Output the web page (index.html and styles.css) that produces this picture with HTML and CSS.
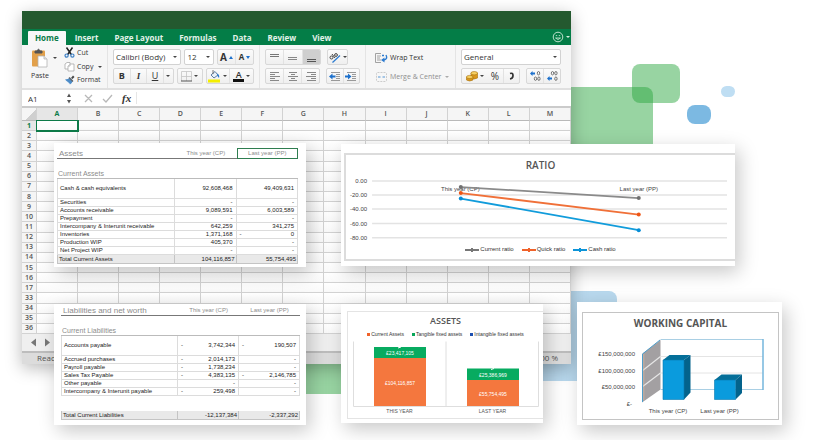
FILE: index.html
```html
<!DOCTYPE html>
<html lang="en">
<head>
<meta charset="utf-8">
<title>Financial workbook</title>
<link rel="stylesheet" href="styles.css">
</head>
<body>
<main class="stage">
  <span class="blob blob-green-large"></span>
  <span class="blob blob-green-small"></span>
  <span class="blob blob-blue"></span>
  <span class="blob blob-sky"></span>
  <span class="blob blob-blue-large"></span>
  <span class="blob blob-green-low"></span>

  <section class="workbook" aria-label="Workbook">
    <div class="titlebar"></div>
    <nav class="tabs">
      <button class="tab tab-active" type="button">Home</button>
      <button class="tab" type="button">Insert</button>
      <button class="tab" type="button">Page Layout</button>
      <button class="tab" type="button">Formulas</button>
      <button class="tab" type="button">Data</button>
      <button class="tab" type="button">Review</button>
      <button class="tab" type="button">View</button>
      <button class="feedback" type="button" aria-label="Feedback">
        <svg width="12" height="12" viewBox="0 0 12 12" fill="none" stroke="#bfe3cd"><circle cx="6" cy="6" r="4.8"/><path d="M3.5 7q2.5 3 5 0zM3.8 4.6h1.4M6.8 4.6h1.4" stroke-width=".9"/></svg>
        <i class="caret caret-light"></i>
      </button>
    </nav>

    <div class="ribbon">
      <div class="group clipboard">
        <button class="paste" type="button">
          <span class="paste-icon">
            <svg width="18" height="20" viewBox="0 0 18 20"><rect x="1" y="2.500" width="13" height="16" rx="1" fill="#e2a04a"/><path d="M4 5V3h2q1.500-3.500 3 0h2v2z" fill="#555" stroke="#555"/><path d="M7 8h6l3 3v8H7z" fill="#fff" stroke="#b4b4b4" stroke-width=".8"/><path d="M13 8v3h3" fill="#e6e6e6" stroke="#b4b4b4" stroke-width=".8"/></svg>
            <i class="caret"></i>
          </span>
          Paste
        </button>
        <div class="clip-list">
          <button class="plain" type="button"><svg width="11" height="11" viewBox="0 0 11 11" fill="none"><path d="M2.500.5l4.800 7M8.500.5l-4.800 7" stroke="#222" stroke-width="1.500"/><circle cx="2.600" cy="8.600" r="1.600" stroke="#3d7fc4" stroke-width="1.200"/><circle cx="8.400" cy="8.600" r="1.600" stroke="#3d7fc4" stroke-width="1.200"/></svg>Cut</button>
          <button class="plain" type="button"><svg width="11" height="11" viewBox="0 0 11 11" fill="#fff" stroke="#aaa" stroke-width=".8"><path d="M1 3l2-1.500h3V8H1z"/><path d="M4 5l2-2h4v7H4z"/><path d="M4 5h2V3"/></svg>Copy <i class="caret"></i></button>
          <button class="plain" type="button"><svg width="11" height="11" viewBox="0 0 11 11"><path d="M7 3l2-2.500 1.500 1.500L8.500 4z" fill="#444"/><path d="M1 4.500q3 0 5-2l3 3q-1 3-3 4z" fill="#4d8cc8"/><path d="M5 2.500l4 4" stroke="#666" stroke-width="1.300"/><path d="M3 6.500l3 3" stroke="#fff" stroke-width=".7"/></svg>Format</button>
        </div>
      </div>

      <div class="group fonts">
        <div class="line">
          <span class="picker picker-font"><select aria-label="Font"><option>Calibri (Body)</option></select><i class="caret"></i></span>
          <span class="picker picker-size"><select aria-label="Font size"><option>12</option></select><i class="caret"></i></span>
          <span class="set size-set">
            <button type="button" aria-label="Grow font"><span class="big-a">A</span><i class="tri-up"></i></button>
            <button type="button" aria-label="Shrink font"><span class="small-a">A</span><i class="tri-down"></i></button>
          </span>
        </div>
        <div class="line">
          <span class="set style-set">
            <button type="button"><b>B</b></button>
            <button type="button"><em>I</em></button>
            <button type="button"><u>U</u></button>
            <button class="narrow" type="button" aria-label="Underline styles"><i class="caret"></i></button>
          </span>
          <span class="set border-set">
            <button type="button" aria-label="Borders"><svg width="11" height="11" viewBox="0 0 11 11"><path d="M.5 10V.5h10V10M5.500.5V10M.5 5.500h10" fill="none" stroke="#c4c4c4" stroke-width=".8"/><path d="M0 10h11" stroke="#555" stroke-width="1.200"/></svg><i class="caret"></i></button>
          </span>
          <span class="set colour-set">
            <button type="button" aria-label="Fill colour"><svg width="13" height="13" viewBox="0 0 13 13"><path d="M3 5l4-3.500L10 5 6 8z" fill="#e8f0f8" stroke="#4d6f96" stroke-width=".9"/><path d="M9 3.500q3 1 2 4.500q-2-1-2-4.500z" fill="#2c7bd0"/><path d="M5 0v4" stroke="#555" stroke-width=".8"/><path d="M0 11h12" stroke="#f4ee00" stroke-width="3"/></svg><i class="caret"></i></button>
            <button type="button" aria-label="Font colour"><span class="colour-a">A</span><i class="caret"></i></button>
          </span>
        </div>
      </div>

      <div class="group align">
        <div class="line">
          <span class="set align-set">
            <button type="button" aria-label="Top"><svg width="9" height="9" viewBox="0 0 9 9" stroke="#777"><path d="M0 1.500h9M0 3.500h9"/></svg></button>
            <button type="button" aria-label="Middle"><svg width="9" height="9" viewBox="0 0 9 9" stroke="#888"><path d="M0 4.500h9M0 6.500h9"/></svg></button>
            <button class="pressed" type="button" aria-label="Bottom"><svg width="9" height="9" viewBox="0 0 9 9" stroke="#555"><path d="M0 6.500h9M0 8.500h9"/></svg></button>
          </span>
          <span class="set orient-set">
            <button type="button" aria-label="Orientation"><svg width="12" height="11" viewBox="0 0 12 11" fill="none"><path d="M3.500 10.500L11 3.500" stroke="#2c7bd0" stroke-width="1.200"/><circle cx="2.500" cy="5.500" r="1.500" stroke="#444"/><path d="M3 2l3 4" stroke="#444"/><circle cx="7" cy="3" r="1.400" stroke="#444"/></svg><i class="caret"></i></button>
          </span>
        </div>
        <div class="line">
          <span class="set align-set">
            <button type="button" aria-label="Left"><svg width="10" height="9" viewBox="0 0 10 9" stroke="#888"><path d="M0 .5h9M0 2.500h5M0 4.500h10M0 6.500h5M0 8.500h9"/></svg></button>
            <button type="button" aria-label="Centre"><svg width="10" height="9" viewBox="0 0 10 9" stroke="#888"><path d="M1 .5h8M3 2.500h4M0 4.500h10M3 6.500h4M1 8.500h8"/></svg></button>
            <button type="button" aria-label="Right"><svg width="10" height="9" viewBox="0 0 10 9" stroke="#888"><path d="M1 .5h9M5 2.500h5M0 4.500h10M5 6.500h5M1 8.500h9"/></svg></button>
          </span>
          <span class="set indent-set">
            <button type="button" aria-label="Decrease indent"><svg width="12" height="9" viewBox="0 0 12 9"><path d="M2 .5h9M7 2.500h4M7 4.500h4M7 6.500h4M2 8.500h9" stroke="#999"/><path d="M0 4.500L3.500 1.500v2h3v2h-3v2z" fill="#1c70cc"/></svg></button>
            <button type="button" aria-label="Increase indent"><svg width="12" height="9" viewBox="0 0 12 9"><path d="M2 .5h9M7 2.500h4M7 4.500h4M7 6.500h4M2 8.500h9" stroke="#999"/><path d="M6.500 4.500L3 1.500v2H0v2h3v2z" fill="#1c70cc"/></svg></button>
          </span>
        </div>
      </div>

      <div class="group wrap">
        <button class="plain" type="button"><svg width="13" height="10" viewBox="0 0 13 10" fill="none"><path d="M6 .5H.5v9H6M2 3h4M2 5h3M2 7h4" stroke="#999" stroke-width=".9"/><path d="M7 2.500h2M11 2q2 4-2 5" stroke="#2c7bd0" stroke-width="1.400"/><path d="M6 7l3.500-2.500v5z" fill="#2c7bd0"/></svg>Wrap Text</button>
        <button class="plain faded" type="button"><svg width="13" height="10" viewBox="0 0 13 10" fill="none"><rect x="1.500" y=".5" width="10" height="9" rx="1" stroke="#ccc" stroke-dasharray="2 1"/><path d="M3 5h2.500M7.500 5H10" stroke="#8ab6e0" stroke-width="1.500"/></svg>Merge &amp; Center <i class="caret"></i></button>
      </div>

      <div class="group number">
        <div class="line">
          <span class="picker picker-number"><select aria-label="Number format"><option>General</option></select><i class="caret"></i></span>
        </div>
        <div class="line">
          <span class="set number-set">
            <button class="wide" type="button" aria-label="Currency"><svg width="12" height="11" viewBox="0 0 12 11" stroke="#a8700c" stroke-width=".6"><path d="M5 2v5q3 2 6.500 0V2z" fill="#d9971d"/><ellipse cx="8.200" cy="2.200" rx="3.300" ry="1.700" fill="#f6cf63"/><path d="M.5 6v3q3 2 6.500 0V6z" fill="#d9971d"/><ellipse cx="3.700" cy="6" rx="3.300" ry="1.600" fill="#f6cf63"/></svg><i class="caret"></i></button>
            <button class="percent" type="button">%</button>
            <button type="button" aria-label="Comma style"><svg width="5" height="8" viewBox="0 0 5 8"><path d="M1 1.500Q4 .5 4 3.500T1 7" fill="none" stroke="#333" stroke-width="1.700"/></svg></button>
          </span>
          <span class="set decimal-set">
            <button type="button" aria-label="Increase decimal"><svg width="11" height="10" viewBox="0 0 11 10"><path d="M0 2.500L2.500 0v1.500H5v2H2.500V5z" fill="#1c70cc"/><g fill="none" stroke="#666" stroke-width=".9"><ellipse cx="8.500" cy="2.200" rx="1.200" ry="1.700"/><ellipse cx="5.500" cy="7.700" rx="1.200" ry="1.700"/><ellipse cx="8.900" cy="7.700" rx="1.200" ry="1.700"/></g></svg></button>
            <button type="button" aria-label="Decrease decimal"><svg width="11" height="10" viewBox="0 0 11 10"><path d="M0 7.500L2.500 5v1.500H5v2H2.500V10z" fill="#1c70cc"/><g fill="none" stroke="#666" stroke-width=".9"><ellipse cx="8.900" cy="2.200" rx="1.200" ry="1.700"/><ellipse cx="5.500" cy="2.200" rx="1.200" ry="1.700"/><ellipse cx="8.900" cy="7.700" rx="1.200" ry="1.700"/></g></svg></button>
          </span>
        </div>
      </div>
    </div>

    <div class="formula-bar">
      <input class="name-box" aria-label="Name box" value="A1">
      <svg class="stepper" width="6" height="11" viewBox="0 0 6 11" fill="#555"><path d="M1 4l2-3.500L5 4zM1 7l2 3.500L5 7z"/></svg>
      <svg class="entry-icons" width="34" height="9" viewBox="0 0 34 9" fill="none" stroke="#b8b8b8" stroke-width="1.300"><path d="M1 1l7 7M8 1L1 8M19 5l3 3 6-7"/></svg>
      <span class="fx">fx</span>
      <input class="formula" aria-label="Formula">
    </div>

    <table class="sheet">
      <thead><tr><th class="corner"></th><th class="current">A</th><th>B</th><th>C</th><th>D</th><th>E</th><th>F</th><th>G</th><th>H</th><th>I</th><th>J</th><th>K</th><th>L</th><th>M</th></tr></thead>
      <tbody id="cells"></tbody>
    </table>

    <div class="sheet-nav">
      <svg width="22" height="9" viewBox="0 0 22 9" fill="#777"><path d="M6 .5v8l-5-4zM15 .5v8l5-4z"/></svg>
    </div>
    <footer class="status"><span>Ready</span><span>100 %</span></footer>
  </section>

  <section class="card ledger-assets">
    <table class="ledger">
      <colgroup><col class="name-col"><col><col></colgroup>
      <thead>
        <tr class="head"><th>Assets</th><th>This year (CP)</th><th class="picked">Last year (PP)</th></tr>
        <tr class="section"><th colspan="3">Current Assets</th></tr>
      </thead>
      <tbody>
        <tr class="tall"><td>Cash &amp; cash equivalents</td><td>92,608,468</td><td>49,409,631</td></tr>
        <tr><td>Securities</td><td>-</td><td>-</td></tr>
        <tr><td>Accounts receivable</td><td>9,089,591</td><td>6,003,589</td></tr>
        <tr><td>Prepayment</td><td>-</td><td>-</td></tr>
        <tr><td>Intercompany &amp; Interunit receivable</td><td>642,259</td><td>341,275</td></tr>
        <tr><td>Inventories</td><td>1,371,168</td><td><span class="sign">-</span>0</td></tr>
        <tr><td>Production WIP</td><td>405,370</td><td>-</td></tr>
        <tr><td>Net Project WIP</td><td>-</td><td>-</td></tr>
      </tbody>
      <tfoot><tr class="total"><td>Total Current Assets</td><td>104,116,857</td><td>55,754,495</td></tr></tfoot>
    </table>
  </section>

  <section class="card ledger-liabilities">
    <table class="ledger">
      <colgroup><col class="name-col"><col><col></colgroup>
      <thead>
        <tr class="head"><th>Liabilities and net worth</th><th>This year (CP)</th><th>Last year (PP)</th></tr>
        <tr class="section"><th colspan="3">Current Liabilities</th></tr>
      </thead>
      <tbody>
        <tr class="tall"><td>Accounts payable</td><td><span class="sign">-</span>3,742,344</td><td><span class="sign">-</span>190,507</td></tr>
        <tr><td>Accrued purchases</td><td><span class="sign">-</span>2,014,173</td><td>-</td></tr>
        <tr><td>Payroll payable</td><td><span class="sign">-</span>1,738,234</td><td>-</td></tr>
        <tr><td>Sales Tax Payable</td><td><span class="sign">-</span>4,383,135</td><td><span class="sign">-</span>2,146,785</td></tr>
        <tr><td>Other payable</td><td>-</td><td>-</td></tr>
        <tr><td>Intercompany &amp; Interunit payable</td><td><span class="sign">-</span>259,498</td><td>-</td></tr>
      </tbody>
      <tfoot>
        <tr class="spacer"><td colspan="3"></td></tr>
        <tr class="total"><td>Total Current Liabilities</td><td>-12,137,384</td><td>-2,337,292</td></tr>
      </tfoot>
    </table>
  </section>

  <section class="card ratio">
    <div class="frame">
      <h2>RATIO</h2>
      <svg class="plot" viewBox="347 175 388 68">
        <path d="M373 181h354M373 195h354M373 209h354M373 223.500h354M373 237.500h354" stroke="#e3e3e3" stroke-width="1.500"/>
        <g class="label end"><text x="368" y="183">0.00</text><text x="368" y="197">-20.00</text><text x="368" y="211">-40.00</text><text x="368" y="225.500">-60.00</text><text x="368" y="239.500">-80.00</text></g>
        <g class="label mid"><text x="461" y="190.500">This year (CP)</text><text x="639" y="190.500">Last year (PP)</text></g>
        <g stroke-width="1.800"><path d="M461.500 187L639 198" stroke="#8a8a8a"/><path d="M461.500 193L639 214.500" stroke="#f07038"/><path d="M461.500 198.500L639 230" stroke="#119cdb"/></g>
        <g fill="#707070"><circle cx="461.500" cy="187" r="2"/><circle cx="639" cy="198" r="2"/></g>
        <g fill="#ee5515"><circle cx="461.500" cy="193" r="2"/><circle cx="639" cy="214.500" r="2"/></g>
        <g fill="#078dd6"><circle cx="461.500" cy="198.500" r="2"/><circle cx="639" cy="230" r="2"/></g>
      </svg>
      <ul class="line-legend"><li class="grey">Current ratio</li><li class="orange">Quick ratio</li><li class="blue">Cash ratio</li></ul>
    </div>
  </section>

  <section class="card assets">
    <div class="frame">
      <h2>ASSETS</h2>
      <ul class="square-legend"><li class="orange">Current Assets</li><li class="green">Tangible fixed assets</li><li class="navy">Intangible fixed assets</li></ul>
      <svg class="plot" viewBox="348 342 195 76">
        <path d="M353.500 343.500V408.500H538.500V343.500M446 343.500V408.500" fill="none" stroke="#dedede"/>
        <path d="M374 349h52v11h-52zM467 370.500h52v12h-52z" fill="#07ab60"/>
        <path d="M374 360h52v48h-52zM467 382h52v26h-52z" fill="#f4773e"/>
        <path d="M398 350l3-1M491 371.500l3-1" stroke="#fff"/>
        <g class="value mid"><text x="400" y="357">£23,417,105</text><text x="400" y="386.500">£104,116,857</text><text x="493" y="379">£25,386,969</text><text x="493" y="397.500">£55,754,495</text></g>
        <g class="tiny mid"><text x="399.500" y="415">THIS YEAR</text><text x="492.500" y="415">LAST YEAR</text></g>
      </svg>
    </div>
  </section>

  <section class="card capital">
    <div class="frame">
      <h2>WORKING CAPITAL</h2>
      <svg class="plot" viewBox="583 334 195 82">
        <path d="M642 354l18.500-14v49.500L642 402.500z" fill="#a3a0a2"/>
        <path d="M642 371l18.500-14.500M642 387l18.500-14" stroke="#e6e6e6" stroke-width="1.200"/>
        <path d="M660.500 356.500H763M660.500 373H763" stroke="#e4e4e4"/>
        <path d="M642.500 402V354L660 340" fill="none" stroke="#4c9dcb"/><path d="M643.800 400V354" stroke="#d9b9a0" stroke-width=".7"/>
        <path d="M660.500 339.500H763M660.500 389.500H763" stroke="#a9cfe4"/><path d="M763 339v51" stroke="#74b6dc" stroke-width="1.500"/>
        <path d="M663 360l6.500-5H690.500l-6.500 5zM714.500 380l7-5.500H742l-6.500 5.500z" fill="#046f99"/>
        <path d="M684 360l6.500-5v37.500l-6.500 7zM735.500 380l6.500-5.500V393l-6.500 6.500z" fill="#03638c"/>
        <path d="M663 360h21v39.500h-21zM714.500 380h21v19.500h-21z" fill="#0a9bdd" stroke="#0878b0" stroke-width=".6"/>
        <g class="label end"><text x="635" y="355.500">£150,000,000</text><text x="635" y="372.500">£100,000,000</text><text x="635" y="389">£50,000,000</text><text x="632" y="405.500">£-</text></g>
        <g class="label mid"><text x="668" y="412.500">This year (CP)</text><text x="719.500" y="412.500">Last year (PP)</text></g>
      </svg>
    </div>
  </section>
</main>
<script src="sheet.js"></script>
</body>
</html>
```
FILE: sheet.js
```js
const body = document.getElementById("cells");
const rows = [...Array(17).keys()].map(n => n + 1).concat([33, 34, 35, 36]);
for (const number of rows) {
  const row = body.insertRow();
  const head = document.createElement("th");
  head.textContent = number;
  row.append(head);
  for (let column = 0; column < 13; column++) row.insertCell();
}
body.rows[0].cells[0].className = "current";
body.rows[0].cells[1].className = "selected";
```
FILE: styles.css
```css
* { box-sizing: border-box; }
body { margin: 0; background: #fff; font-family: "Open Sans", "Noto Sans", sans-serif; color: #333; }
button, input, select { font: inherit; color: inherit; margin: 0; padding: 0; border: 0; background: none; }
svg { display: block; flex: none; }

.stage {
  position: relative;
  display: grid;
  min-height: 100vh;
  overflow: hidden;
  grid-template-columns: 22fr 32fr 252fr 35fr 202fr 28fr 6fr 158fr 47fr 38fr;
  grid-template-rows: 11px 132px 124px 36px 61px 61px auto;
}
.stage > section { min-width: 0; }

.blob { position: absolute; background: rgba(43, 166, 64, .485); border-radius: 8px; }
.blob-green-large { left: 500px; top: 87px; width: 153px; height: 120px; }
.blob-green-small { left: 632px; top: 64px; width: 48px; height: 39px; }
.blob-blue { left: 687px; top: 105px; width: 24px; height: 19px; background: #7cb9e2; }
.blob-sky { left: 721px; top: 86px; width: 14px; height: 11px; background: #bfdef3; }
.blob-blue-large { left: 480px; top: 291px; width: 137px; height: 90px; background: #b9d9ee; }
.blob-green-low { left: 200px; top: 300px; width: 200px; height: 94px; }

/* Workbook window */
.workbook {
  position: relative;
  grid-column: 2 / 7;
  grid-row: 2 / 6;
  display: flex;
  flex-direction: column;
  background: #fff;
  box-shadow: 0 4px 16px rgba(0, 0, 0, .28);
}
.titlebar { height: 18px; background: #24592f; }
.tabs { display: flex; height: 16px; padding: 2px 1px 0 6px; background: #047d47; font-size: 8px; font-weight: 700; line-height: 14px; color: #e3f3ea; }
.tab { padding: 0 8px; white-space: nowrap; }
.tab-active { background: #f7f7f7; color: #0a7a48; padding: 0 7px; margin-right: 1px; border-radius: 1px 1px 0 0; }
.feedback { display: flex; align-items: center; gap: 2px; margin-left: auto; height: 12px; }

.caret { display: inline-block; flex: none; border: 2px solid transparent; border-top: 2px solid #444; border-bottom: 0; }
.caret-light { border-top-color: #d5eedd; }

.ribbon {
  display: grid;
  grid-template-columns: 86fr 152fr 106fr 90fr 115fr;
  height: 43px;
  background: #f6f6f6;
  font-size: 7px;
  font-weight: 500;
}
.group { min-width: 0; padding: 4px 5px; border-right: 1px solid #e4e4e4; display: flex; flex-direction: column; gap: 3px; }
.group:last-child { padding-right: 10px; border-right: 0; }
.line { display: flex; gap: 3px; height: 16px; }

.clipboard { flex-direction: row; gap: 6px; padding: 1px 2px 0 9px; }
.paste { display: flex; flex-direction: column; width: 27px; line-height: 12px; text-align: left; }
.paste-icon { display: flex; align-items: center; gap: 4px; height: 24px; }
.clip-list { display: flex; flex-direction: column; padding-bottom: 1px; }
.plain { display: flex; align-items: center; gap: 4px; height: 13px; white-space: nowrap; line-height: 10px; }
.clip-list .plain { flex: 1; gap: 2px; }
.clip-list .caret { margin-left: 3px; }

.picker { position: relative; display: flex; align-items: center; border: 1px solid #d2d2d2; border-radius: 2px; background: #fff; }
.picker select { width: 100%; height: 100%; appearance: none; padding-left: 2px; font-size: 8px; line-height: 10px; }
.picker .caret { position: absolute; right: 3px; pointer-events: none; }
.picker-font { flex: 70; min-width: 0; }
.picker-size { flex: 29; min-width: 0; }
.picker-number { flex: 1; }
.size-set { flex: 37; }
.style-set { flex: 62; }
.border-set { flex: 25; }
.colour-set { flex: 49; }
.align-set { flex: 0 1 56px; }
.orient-set { flex: 0 1 21px; margin-left: 3px; }
.indent-set { flex: 0 1 34px; margin-left: 3px; }
.number-set { flex: 60; margin-right: 3px; }
.decimal-set { flex: 34; }

.set { display: flex; min-width: 0; border: 1px solid #d8d8d8; border-radius: 2px; background: linear-gradient(#fbfbfb, #efefef); overflow: hidden; }
.set button { flex: 1; min-width: 0; display: flex; align-items: center; justify-content: center; gap: 2px; font-size: 9px; line-height: 12px; }
.set button + button { border-left: 1px solid #e2e2e2; }
.set .narrow { flex: 0 0 10px; }
.set .wide { flex: 0 0 25px; }
.set .percent { border-left: 0; font-size: 10px; }
.set .pressed { background: #cfcfcf; }
.style-set em { font-family: "Liberation Serif", serif; font-weight: 700; }
.set .big-a { font-size: 10px; font-weight: 700; }
.set .small-a { font-size: 8px; font-weight: 700; }
.tri-up, .tri-down { border: 2px solid transparent; }
.tri-up { border-top: 0; border-bottom: 3px solid #1c70cc; }
.tri-down { border-bottom: 0; border-top: 3px solid #1c70cc; }
.colour-a { width: 11px; border-bottom: 3px solid #111; font-size: 9px; line-height: 9px; font-weight: 600; }

.wrap { padding: 6px 0 0 9px; gap: 6px; }
.wrap .plain { gap: 2px; }
.wrap .caret { margin-left: 2px; }
.faded { color: #8f8f8f; }
.faded .caret { border-top-color: #aaa; }

.formula-bar { display: flex; align-items: center; height: 20px; border-top: 2px solid #e0e0e0; border-bottom: 2px solid #cbcbcb; background: #fff; }
.name-box { width: 39px; padding-left: 6px; font-size: 8px; height: 14px; }
.stepper { margin-left: 5px; }
.entry-icons { margin-left: 12px; }
.fx { margin-left: 4px; padding-right: 5px; border-right: 1px solid #e6e6e6; font: italic 700 11px/12px "Liberation Serif", serif; }
.formula { flex: 1; min-width: 0; height: 14px; }

.sheet { width: 100%; height: 226px; table-layout: fixed; border-collapse: separate; border-spacing: 0; font-size: 7px; line-height: 8px; }
.sheet th, .sheet td { padding: 0; border: 0 solid #d2d2d2; border-width: 0 1px 1px 0; }
.sheet td { background: linear-gradient(#fff, #f9f9f9); }
.sheet th { background: #f5f5f5; color: #555; font-weight: 600; }
.sheet thead th { height: 13px; border-bottom-color: #b9b9b9; }
.sheet .corner { width: 15px; background: linear-gradient(135deg, #f5f5f5 60%, #cfcfcf 60%); }
.sheet .current { color: #0b7c48; font-weight: 700; background: #e6e6e6; }
.sheet .selected { outline: 1px solid #0d7a48; border-color: #0d7a48; position: relative; }
.sheet-nav { display: flex; align-items: center; height: 17px; padding-left: 8px; background: #efefef; }
.status { display: flex; justify-content: space-between; flex: 1; padding: 0 13px 0 15px; border-top: 2px solid #bdbdbd; background: #dcdcdc; font-size: 8px; line-height: 10px; color: #555; }

/* Floating cards */
.card { position: relative; display: flex; flex-direction: column; background: #fff; box-shadow: 4px 6px 18px rgba(0, 0, 0, .22); font-family: "Liberation Sans", sans-serif; }
.ledger-assets { grid-column: 3; grid-row: 3; padding: 5px 8px 0 3px; }
.ledger-liabilities { grid-column: 3; grid-row: 5 / 7; margin-top: 1px; padding: 0 6px 0 7px; }
.ratio { grid-column: 5 / 9; grid-row: 3; margin: 1px 0; padding: 9px 0 5px 3px; }
.assets { grid-column: 5; grid-row: 5 / 7; margin: 1px 0 2px; padding: 7px 0 4px 6px; }
.capital { grid-column: 8 / 10; grid-row: 5 / 7; margin-top: -1px; padding: 10px 3px 5px 5px; }

.ledger { width: 100%; table-layout: fixed; border-collapse: separate; border-spacing: 0; font-size: 6px; line-height: 7px; color: #222; }
.ledger .name-col { width: 49%; }
.ledger td { height: 8px; padding: 0 3px; border: 0 solid #dcdcdc; border-width: 0 1px 1px 0; text-align: right; white-space: nowrap; }
.ledger td:first-child { border-left-width: 1px; padding-left: 2px; text-align: left; }
.ledger .tall td { height: 20px; }
.ledger .total td { height: 9px; background: #e9e9e9; border-color: #c4c4c4; padding: 0 1px; }
.ledger .spacer td { height: 15px; border-width: 0; }
.ledger th { padding: 0; font-weight: 400; color: #8c8c8c; }
.ledger .head th { height: 11px; border-bottom: 1px solid #777; font-size: 6px; }
.ledger-liabilities .head th { height: 12px; padding-top: 1px; }
.ledger .head th:first-child { padding-left: 2px; font-size: 8px; text-align: left; white-space: nowrap; }
.ledger .head .picked { border: 1px solid #2f7d50; }
.ledger .section th { height: 20px; padding: 0 1px 1px; border-bottom: 1px solid #bbb; font-size: 7px; text-align: left; vertical-align: bottom; }
.sign { float: left; }

.frame { flex: 1; min-height: 0; display: flex; flex-direction: column; border: 2px solid #dcdcdc; }
.ratio .frame { border-right: 0; }
.assets .frame { border: 1px solid #e4e4e4; border-right: 0; }
.capital .frame { border-width: 1px; border-color: #c4c4c4; }
.frame h2 { margin: 0; text-align: center; font: 600 10px/20px "Open Sans", sans-serif; color: #555; }
.assets h2 { font-size: 9px; line-height: 18px; }
.capital h2 { font-weight: 700; line-height: 21px; }
.plot { width: 100%; height: auto; }
.label { font-size: 6px; fill: #444; }
.value { font-size: 5px; fill: #fff; }
.tiny { font-size: 5px; fill: #555; }
.mid { text-anchor: middle; }
.end { text-anchor: end; }

.line-legend, .square-legend { display: flex; justify-content: center; margin: 0; padding: 0; list-style: none; }
.line-legend { gap: 8px; font-size: 6px; line-height: 13px; }
.line-legend li { display: flex; align-items: center; gap: 1px; }
.line-legend li::before { content: ""; width: 14px; height: 4px; background: radial-gradient(circle, currentColor 2px, transparent 2px), linear-gradient(transparent 1px, currentColor 1px, currentColor 3px, transparent 3px); color: var(--key); }
.square-legend { gap: 8px; padding-bottom: 2px; font-size: 5px; line-height: 8px; }
.square-legend li { display: flex; align-items: center; gap: 1px; }
.square-legend li::before { content: ""; width: 3px; height: 3px; background: var(--key); }
.grey { --key: #777; }
.orange { --key: #f0622a; }
.blue { --key: #0d94d8; }
.green { --key: #07a659; }
.navy { --key: #1b4fb0; }
```
